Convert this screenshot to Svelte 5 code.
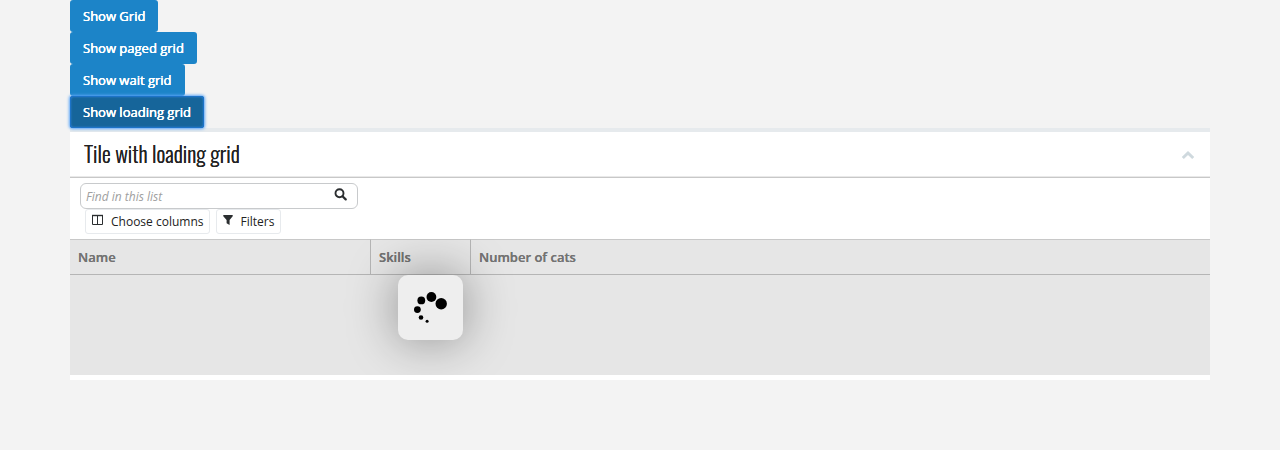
<script>
  const buttons = ['Show Grid', 'Show paged grid', 'Show wait grid', 'Show loading grid'];
  const columns = ['Name', 'Skills', 'Number of cats'];
  let active = $state(3);
  let open = $state(true);
  let query = $state('');
</script>

<main>
  <div class="actions">
    {#each buttons as label, i}
      <button class="primary" class:active={active === i} onclick={() => (active = i)}>{label}</button>
    {/each}
  </div>

  <section class="tile">
    <header>
      <h1>Tile with loading grid</h1>
      <button class="toggle" aria-label="Collapse tile" aria-expanded={open} onclick={() => (open = !open)}>
        <svg width="14" height="10" viewBox="0 0 14 10"><path d="M1.8 8 7 3l5.2 5" fill="none" stroke="#cfd9de" stroke-width="3" /></svg>
      </button>
    </header>

    {#if open}
      <div class="toolbar">
        <form class="search" onsubmit={(e) => e.preventDefault()}>
          <input type="text" placeholder="Find in this list" aria-label="Find in this list" bind:value={query} />
          <button class="find" aria-label="Search">
            <svg width="13" height="13" viewBox="0 0 13 13"><circle cx="5.5" cy="5.2" r="4" fill="none" stroke="#2b2e30" stroke-width="1.9" /><path d="m8.5 8.2 3.2 3.2" stroke="#2b2e30" stroke-width="2.2" stroke-linecap="round" /></svg>
          </button>
        </form>
        <div class="tools">
          <button class="tool">
            <svg width="12" height="12" viewBox="0 0 12 12"><path d="M.5 1.5h10v9H.5zM5.5 1.5v9" fill="none" stroke="#2b2e30" /><path d="M0 1.5h11" stroke="#2b2e30" stroke-width="1.4" /></svg>
            Choose columns
          </button>
          <button class="tool">
            <svg width="10" height="12" viewBox="0 0 10 12"><path d="M.3 1h9.4v1.2L6.6 6v5L3.6 9.2V6L.3 2.2z" fill="#2b2e30" /></svg>
            Filters
          </button>
        </div>
      </div>

      <div class="grid" aria-busy="true">
        <table>
          <thead>
            <tr>
              {#each columns as column}
                <th scope="col">{column}</th>
              {/each}
            </tr>
          </thead>
          <tbody>
            <tr><td colspan="3"></td></tr>
          </tbody>
        </table>
        <div class="loader" role="status" aria-label="Loading">
          <svg width="65" height="65" viewBox="0 0 65 65">
            <circle cx="43.2" cy="28.8" r="5.7" />
            <circle cx="33.4" cy="22" r="4.9" />
            <circle cx="23.3" cy="25.4" r="3.9" />
            <circle cx="19.4" cy="34.6" r="3.4" />
            <circle cx="23" cy="42.5" r="2.3" />
            <circle cx="29.1" cy="46.3" r="1.5" />
          </svg>
        </div>
      </div>
    {/if}
  </section>
</main>

<style>
  :global(body) {
    margin: 0;
    background: #f3f3f3;
  }
  main {
    box-sizing: border-box;
    max-width: 1170px;
    margin: 0 auto;
    padding: 0 15px;
    font-family: 'Open Sans', sans-serif;
    font-size: 13px;
    color: #222;
  }
  button,
  input {
    box-sizing: border-box;
    margin: 0;
    font: inherit;
    color: inherit;
  }
  button {
    cursor: pointer;
  }
  svg {
    display: block;
  }
  .actions {
    display: flex;
    flex-direction: column;
    align-items: flex-start;
  }
  .primary {
    height: 32px;
    padding: 0 13px;
    border: 0;
    border-radius: 3px;
    background: #1c84c8;
    color: #fff;
    font-weight: 500;
    text-shadow: 0 0 0 #fff, 0 0 0 #fff;
  }
  .primary.active {
    position: relative;
    background: #16659a;
    outline: none;
    box-shadow:
      inset 0 0 0 1px #1c73c8,
      inset 0 0 2px 1px #2f80d8,
      0 0 3px 1px #5aa5f7;
  }
  .tile {
    border-top: 4px solid #e6eaed;
    background: #fff;
    padding-bottom: 5px;
  }
  header {
    display: flex;
    align-items: center;
    justify-content: space-between;
    height: 45px;
    padding: 0 15px 0 14px;
    border-bottom: 1px solid #c8c8c8;
    box-shadow: inset 0 -1px #e9e9e9;
  }
  h1 {
    margin: 0;
    padding-bottom: 4px;
    font: 300 22px/40px Oswald, 'Liberation Sans Narrow', 'DejaVu Sans Condensed', sans-serif;
    text-shadow: 0 0 0 #222;
  }
  .toggle {
    padding: 0;
    border: 0;
    background: none;
  }
  .toolbar {
    padding: 5px 10px;
  }
  .search {
    display: flex;
    align-items: center;
    box-sizing: border-box;
    width: 278px;
    max-width: 100%;
    height: 26px;
    border: 1px solid #c8cacc;
    border-radius: 6px;
    background: #fff;
  }
  .search input {
    flex: 1;
    min-width: 0;
    padding: 0 5px;
    border: 0;
    outline: none;
    background: none;
    font-size: 12px;
  }
  .search input::placeholder {
    color: #a0a0a0;
    font-style: italic;
    opacity: 1;
  }
  .find {
    padding: 0 10px 3px;
    border: 0;
    background: none;
  }
  .tools {
    display: flex;
    gap: 6px;
    padding-left: 5px;
  }
  .tool {
    display: flex;
    align-items: center;
    gap: 7px;
    height: 25px;
    padding: 0 6px;
    border: 1px solid #e7eaed;
    border-radius: 3px;
    background: #fff;
    font-size: 12px;
  }
  .tool svg {
    margin-bottom: 4px;
  }
  .grid {
    position: relative;
    overflow: hidden;
    background: #e6e6e6;
  }
  table {
    width: 100%;
    table-layout: fixed;
    border-collapse: separate;
    border-spacing: 0;
  }
  th {
    box-sizing: border-box;
    height: 36px;
    padding: 0 8px;
    border: 1px solid #b5b5b5;
    border-top-color: #c8c8c8;
    border-width: 1px 0 1px 1px;
    color: #737373;
    font-weight: 600;
    text-align: left;
    text-shadow: 0 0 0 #737373;
  }
  th:first-child {
    width: 300px;
    border-left: 0;
  }
  th:nth-child(2) {
    width: 100px;
  }
  td {
    height: 100px;
    padding: 0;
  }
  .loader {
    position: absolute;
    top: 36px;
    left: 328px;
    border-radius: 10px;
    background: #eee;
    box-shadow: 0 0 50px rgba(0, 0, 0, 0.4);
  }
</style>
